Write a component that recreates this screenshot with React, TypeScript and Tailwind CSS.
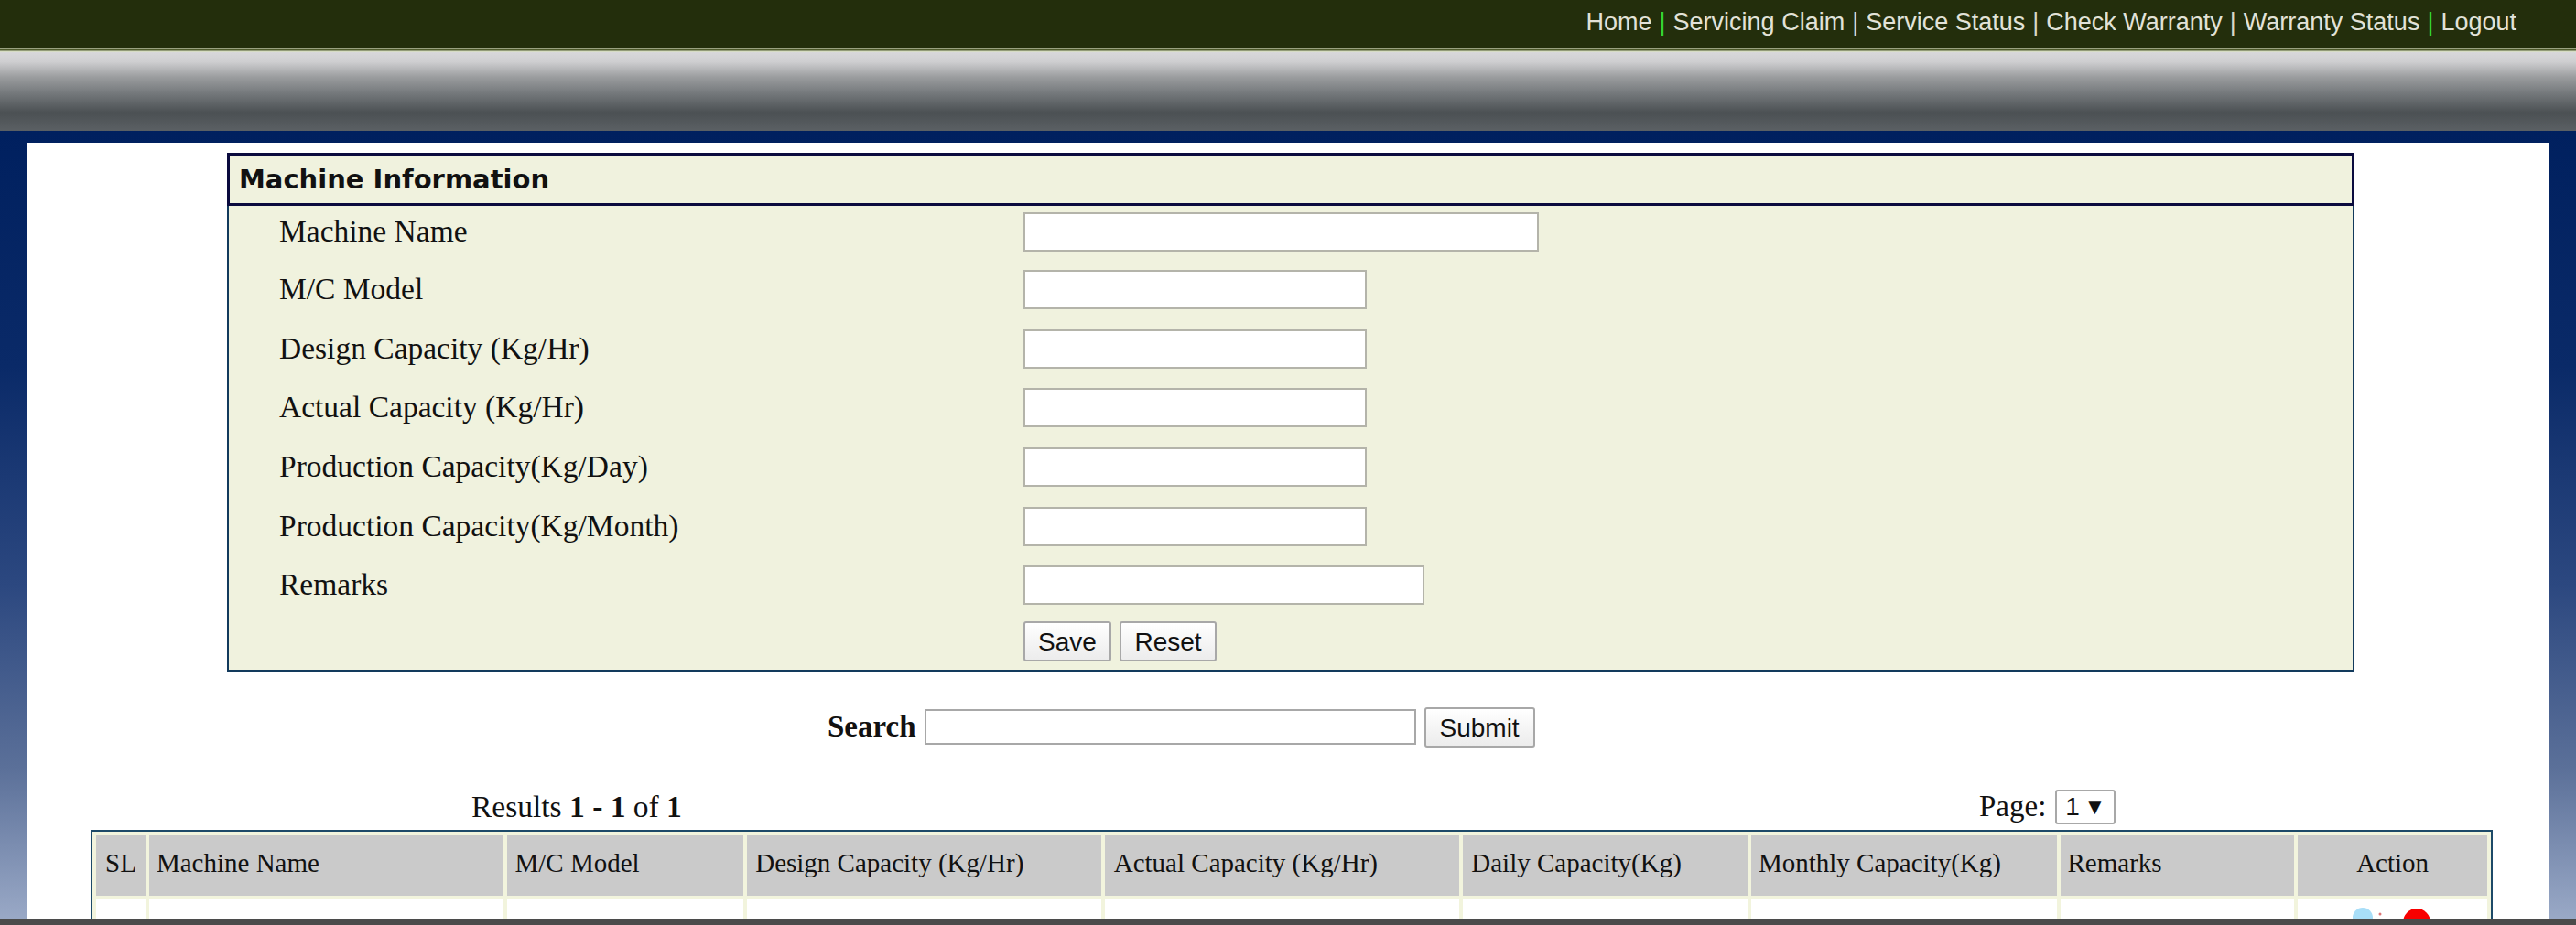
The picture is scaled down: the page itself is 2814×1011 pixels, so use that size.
import React from 'react';

const navLinks: [string, string][] = [
  ['Home', 'text-[#35d435]'],
  ['Servicing Claim', 'text-[#d8d8c8]'],
  ['Service Status', 'text-[#d8d8c8]'],
  ['Check Warranty', 'text-[#d8d8c8]'],
  ['Warranty Status', 'text-[#35d435]'],
  ['Logout', ''],
];

const fields = [
  { label: 'Machine Name', width: 'w-[563px]', row: 'h-[63px]' },
  { label: 'M/C Model', width: 'w-[375px]', row: 'h-[65px]' },
  { label: 'Design Capacity (Kg/Hr)', width: 'w-[375px]', row: 'h-[64px]' },
  { label: 'Actual Capacity (Kg/Hr)', width: 'w-[375px]', row: 'h-[65px]' },
  { label: 'Production Capacity(Kg/Day)', width: 'w-[375px]', row: 'h-[65px]' },
  { label: 'Production Capacity(Kg/Month)', width: 'w-[375px]', row: 'h-[64px]' },
  { label: 'Remarks', width: 'w-[438px]', row: 'h-[61px]' },
];

const columns = [
  { label: 'SL', width: 'w-[54px]', cls: 'justify-center' },
  { label: 'Machine Name', width: 'w-[388px]', cls: 'pl-[8px]' },
  { label: 'M/C Model', width: 'w-[258px]', cls: 'pl-[8px]' },
  { label: 'Design Capacity (Kg/Hr)', width: 'w-[387px]', cls: 'pl-[9px]' },
  { label: 'Actual Capacity (Kg/Hr)', width: 'w-[388px]', cls: 'pl-[10px]' },
  { label: 'Daily Capacity(Kg)', width: 'w-[311px]', cls: 'pl-[9px]' },
  { label: 'Monthly Capacity(Kg)', width: 'w-[334px]', cls: 'pl-[8px]' },
  { label: 'Remarks', width: 'w-[256px]', cls: 'pl-[8px]' },
  { label: 'Action', width: 'w-[207px]', cls: 'justify-center' },
];

const Btn = ({ label, width }: { label: string; width: string }) => (
  <button className={`${width} h-[44px] bg-gradient-to-b from-white to-[#ececec] border-2 border-[#a8a8a8] rounded-[3px] font-['Liberation_Sans',sans-serif] text-[28px] text-[#111]`}>
    {label}
  </button>
);

const App: React.FC = () => {
  return (
    <div className="relative h-[1011px] overflow-hidden font-['Liberation_Serif',serif] text-[#111] bg-[linear-gradient(180deg,#00205f_143px,#0a2a68_400px,#2c4880_640px,#5b7099_840px,#9cabc8_1011px)]">
      {/* top nav */}
      <div className="h-[52px] bg-[#232e0c] flex items-center justify-end pr-[65px] pb-[3px] font-['Liberation_Sans',sans-serif] text-[27px] text-[#e2e2d8]">
        {navLinks.map(([name, sep]) => (
          <React.Fragment key={name}>
            <span>{name}</span>
            {sep && <span className={`mx-[8px] ${sep}`}>|</span>}
          </React.Fragment>
        ))}
      </div>
      <div className="h-[5px] bg-[linear-gradient(180deg,#e4e8d4_0,#e4e8d4_1px,#4e5a2c_2px,#4e5a2c_3px,#d6dcc4_4px)]" />
      <div className="h-[86px] bg-[linear-gradient(180deg,#d8d8da_0%,#cfcfd1_12%,#9a9c9e_32%,#75797c_52%,#4b5053_77%,#5b6064_100%)]" />

      {/* white page */}
      <div className="mt-[13px] ml-[29px] mr-[30px] h-[855px] bg-white pt-[11px]">
        <div className="ml-[219px] w-[2324px] h-[567px] border-2 border-[#123a5c] bg-[#f0f2de]">
          <div className="h-[58px] -mx-[2px] -mt-[2px] border-[3px] border-[#0b0b3e] flex items-center pl-[10px] pt-[2px] font-['DejaVu_Sans',sans-serif] font-bold text-[29px]">
            Machine Information
          </div>
          <div className="pt-[7px]">
            {fields.map(f => (
              <div key={f.label} className={`${f.row} flex items-start`}>
                <div className="w-[868px] pl-[55px] text-[33.5px] leading-[37px] pt-[2px]">{f.label}</div>
                <input className={`${f.width} h-[43px] bg-white border-2 border-[#b4b4aa] outline-none`} />
              </div>
            ))}
            <div className="flex gap-[9px] pl-[868px]">
              <Btn label="Save" width="w-[96px]" />
              <Btn label="Reset" width="w-[106px]" />
            </div>
          </div>
        </div>

        {/* search */}
        <div className="mt-[39px] flex items-center pl-[875px] h-[43px]">
          <b className="text-[33px] mr-[9px]">Search</b>
          <input className="w-[537px] h-[39px] bg-white border-2 border-[#a8a8a8] outline-none mr-[9px]" />
          <Btn label="Submit" width="w-[121px]" />
        </div>

        {/* paging */}
        <div className="mt-[46px] h-[40px] flex items-center">
          <div className="ml-[486px] text-[33.5px] w-[228px] whitespace-nowrap">
            Results <b>1 - 1</b> of <b>1</b>
          </div>
          <div className="ml-[1419px] flex items-center text-[33px]">
            Page:
            <div className="ml-[10px] w-[66px] h-[38px] border-2 border-[#a8a8a8] rounded-[3px] flex items-center justify-between px-[9px] font-['Liberation_Sans',sans-serif] text-[28px]">
              <span>1</span>
              <span className="text-[24px]">▼</span>
            </div>
          </div>
        </div>

        {/* table */}
        <div className="mt-[5px] ml-[70px] w-[2624px] h-[120px] border-2 border-[#1d4a68] bg-[#f2f4dd] p-[4px] pb-0 box-border">
          <div className="flex gap-[4px] h-[66px]">
            {columns.map(c => (
              <div key={c.label} className={`${c.width} bg-[#cacaca] flex items-center pb-[4px] text-[29px] whitespace-nowrap ${c.cls}`}>
                {c.label}
              </div>
            ))}
          </div>
          <div className="flex gap-[4px] mt-[4px] h-[60px]">
            {columns.map(c => (
              <div key={c.label} className={`${c.width} bg-white flex items-start justify-center pt-[9px]`}>
                {c.label === 'Action' && (
                  <svg width="88" height="30" viewBox="0 0 88 30">
                    <circle cx="11" cy="11" r="11" fill="#a8def8" />
                    <circle cx="30" cy="7" r="1.5" fill="#d77" />
                    <circle cx="70" cy="16" r="15" fill="#f80000" />
                  </svg>
                )}
              </div>
            ))}
          </div>
        </div>
      </div>

      {/* bottom bar sits over the page */}
      <div className="absolute left-0 right-0 bottom-0 h-[7px] bg-[#4b4b4b]" />
    </div>
  );
};

export default App;
